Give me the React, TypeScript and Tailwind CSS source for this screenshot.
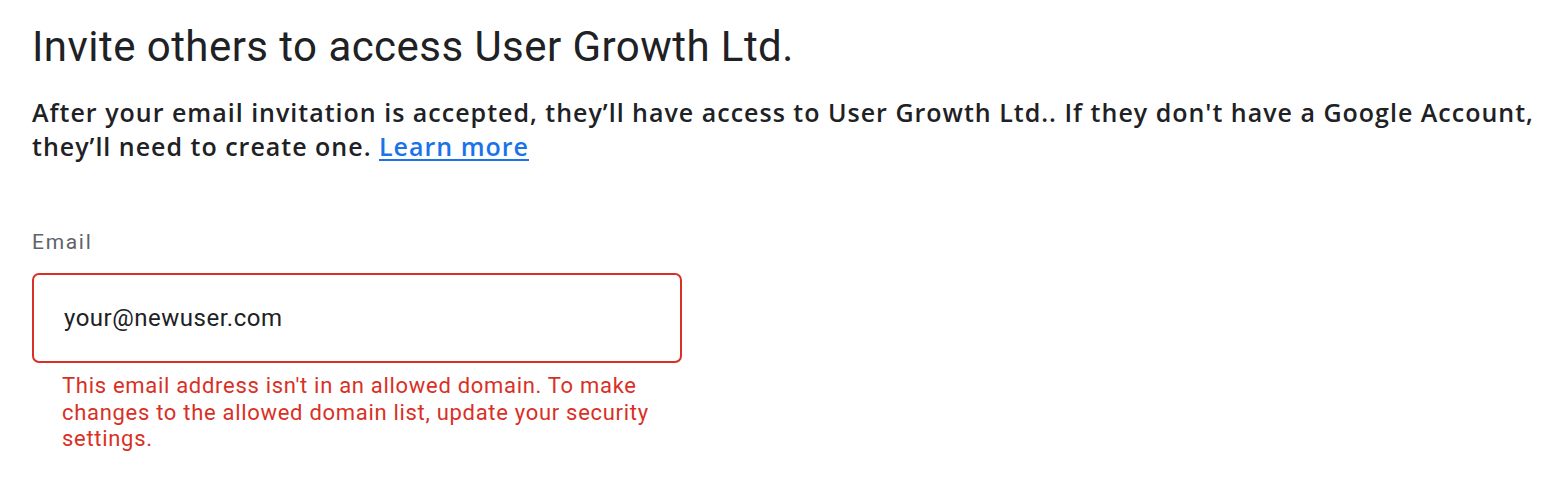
import * as React from "react";

export default function App() {
   return (
      <div className="w-[1560px] h-[484px] bg-white font-['Roboto',sans-serif] text-[#202124] overflow-hidden">
         <div className="pl-8 pt-[23px]">
            <h1 className="text-[42px] leading-[48px] font-normal tracking-[0.45px] whitespace-nowrap">
               Invite others to access User Growth Ltd.
            </h1>
            <p className="mt-[24px] font-['Open_Sans',sans-serif] text-[25px] leading-[34px] font-semibold tracking-[1px] whitespace-nowrap">
               After your email invitation is accepted, they’ll have access to User Growth Ltd.. If they don't have a
               Google Account,
               <br />
               they’ll need to create one.{" "}
               <a href="#" className="text-[#1a73e8] underline underline-offset-[3px]">
                  Learn more
               </a>
            </p>
            <div className="mt-[67px] text-[21px] leading-6 text-[#5f6368] tracking-[1.7px]">Email</div>
            <div className="mt-[19px] w-[650px] h-[90px] border-2 border-[#d93025] rounded-[7px] flex items-center px-[30px]">
               <span className="text-[24px] text-[#202124] tracking-[0.5px]">your@newuser.com</span>
            </div>
            <p className="mt-[10px] ml-[30px] w-[600px] text-[22px] leading-[26.5px] text-[#d93025] tracking-[0.7px]">
               This email address isn't in an allowed domain. To make changes to the allowed domain list, update your
               security settings.
            </p>
         </div>
      </div>
   );
}
